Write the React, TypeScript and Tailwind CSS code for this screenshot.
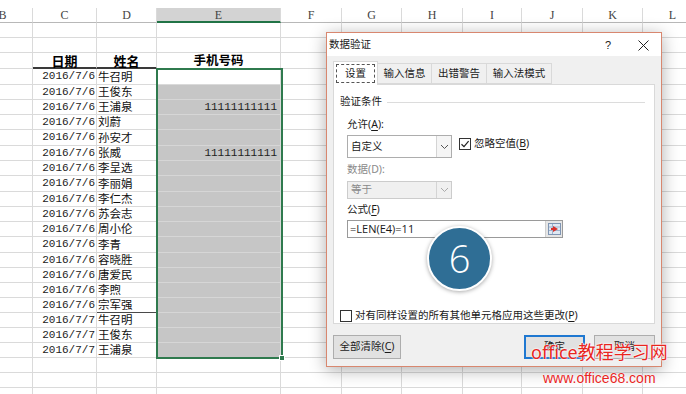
import React from "react"

const COLS = [60, 64, 60, 124, 61, 60, 61, 59, 61, 60, 60]
const LETTERS = ["B", "C", "D", "E", "F", "G", "H", "I", "J", "K", "L"]
const ROW_H = [15, 15, 16, 16, 15, 15, 15, 16, 15, 15, 16, 15, 15, 15, 16, 15, 15, 15, 15, 15, 15, 15, 15, 15, 15]

const NAMES = [
  "牛召明", "王俊东", "王浦泉", "刘蔚", "孙安才", "张威", "李呈选", "李丽娟", "李仁杰", "苏会志",
  "周小伦", "李青", "容晓胜", "唐爱民", "李煦", "宗军强", "牛召明", "王俊东", "王浦泉",
]

const cjk = "font-['Noto_Sans_CJK_SC',sans-serif]"
const ui = "font-['Noto_Sans','Noto_Sans_CJK_SC',sans-serif]"

const Cell = ({ w, h, className = "", children }: { w: number; h: number; className?: string; children?: React.ReactNode }) => (
  <div
    className={`shrink-0 border-r border-b border-[#dadada] flex items-center whitespace-nowrap leading-none ${className}`}
    style={{ width: w, height: h }}
  >
    {children}
  </div>
)

const SheetRow = ({ index }: { index: number }) => {
  const h = ROW_H[index]
  const d = index - 3
  const isData = d >= 0 && d < NAMES.length
  return (
    <div className="flex">
      {COLS.map((w, c) => {
        if (index === 2 && c === 1)
          return (
            <Cell key={c} w={w} h={h} className={`justify-center font-bold text-[13px] text-black border-b-2 border-b-[#3a3a3a] ${cjk}`}>
              日期
            </Cell>
          )
        if (index === 2 && c === 2)
          return (
            <Cell key={c} w={w} h={h} className={`justify-center font-bold text-[13px] text-black border-b-2 border-b-[#3a3a3a] ${cjk}`}>
              姓名
            </Cell>
          )
        if (index === 2 && c === 3)
          return (
            <Cell key={c} w={w} h={h} className={`justify-center font-bold text-[12.5px] text-black ${cjk}`}>
              手机号码
            </Cell>
          )
        if (isData && c === 1)
          return (
            <Cell key={c} w={w} h={h} className="justify-end pr-[1px] text-[11px] text-[#222] font-['Liberation_Mono',monospace]">
              {d < 16 ? "2016/7/6" : "2016/7/7"}
            </Cell>
          )
        if (isData && c === 2)
          return (
            <Cell key={c} w={w} h={h} className={`pl-[1px] text-[11.5px] text-[#111] ${cjk} ${d === 15 ? "border-b-[#4a4a4a]" : ""}`}>
              {NAMES[d]}
            </Cell>
          )
        if (isData && c === 3)
          return (
            <Cell
              key={c}
              w={w}
              h={h}
              className={`justify-end pr-[3px] text-[11px] text-[#222] font-['Liberation_Mono',monospace] ${d > 0 ? "bg-[#c6c6c6] border-b-[#d6d6d6]" : ""}`}
            >
              {d === 2 || d === 5 ? "11111111111" : ""}
            </Cell>
          )
        return <Cell key={c} w={w} h={h} />
      })}
    </div>
  )
}

const Check = ({ checked }: { checked?: boolean }) => (
  <div className="w-[12px] h-[12px] border border-[#333] bg-white flex items-center justify-center shrink-0">
    {checked && (
      <svg width="10" height="10" viewBox="0 0 10 10">
        <path d="M1.5 5.2 L4 7.6 L8.6 2.2" fill="none" stroke="#222" strokeWidth="1.2" />
      </svg>
    )}
  </div>
)

const Chevron = ({ color }: { color: string }) => (
  <svg width="9" height="6" viewBox="0 0 9 6">
    <path d="M1 1 L4.5 4.5 L8 1" fill="none" stroke={color} strokeWidth="1" />
  </svg>
)

const U = ({ children }: { children: React.ReactNode }) => <span className="underline underline-offset-2">{children}</span>

const Dialog = () => (
  <div className={`absolute left-[326px] top-[32px] w-[336px] h-[335px] border border-[#d8876f] bg-[#f0f0f0] shadow-[0_3px_16px_rgba(0,0,0,0.32)] flex flex-col text-[10.5px] text-[#1a1a1a] ${ui}`}>
    {/* title bar */}
    <div className="h-[23px] bg-white flex items-center pl-[2px] pr-[12px] shrink-0">
      <span className="flex-1 mt-[1px]">数据验证</span>
      <span className="mr-[27px] mt-[1px] text-[11px] font-['Liberation_Sans',sans-serif]">?</span>
      <svg width="11" height="11" viewBox="0 0 11 11" className="mt-[1px]">
        <path d="M0.5 0.5 L10.5 10.5 M10.5 0.5 L0.5 10.5" stroke="#222" strokeWidth="1" />
      </svg>
    </div>
    <div className="flex-1 flex flex-col px-[6px] pt-[5px] bg-[#f0f0f0]">
      {/* tabs */}
      <div className="flex items-end h-[23px] shrink-0">
        <div className="relative z-10 w-[45px] h-[24px] -mb-px bg-white border border-b-0 border-[#d9d9d9] flex items-center justify-center">
          <div className="w-[39px] h-[19px] border border-dashed border-[#555] flex items-center justify-center">设置</div>
        </div>
        <div className="w-[54px] h-[21px] border border-l-0 border-[#d9d9d9] flex items-center justify-center bg-[#f0f0f0]">输入信息</div>
        <div className="w-[55px] h-[21px] border border-l-0 border-[#d9d9d9] flex items-center justify-center bg-[#f0f0f0]">出错警告</div>
        <div className="w-[65px] h-[21px] border border-l-0 border-[#d9d9d9] flex items-center justify-center bg-[#f0f0f0]">输入法模式</div>
      </div>
      {/* panel */}
      <div className="h-[240px] bg-white border border-[#d9d9d9] flex flex-col px-[6px] shrink-0">
        <div className="flex items-center mt-[10px] h-[14px]">
          <span>验证条件</span>
          <div className="flex-1 h-px bg-[#dcdcdc] ml-[5px] mr-[3px]" />
        </div>
        <div className="ml-[7px] mt-[9px] h-[14px] flex items-center">
          允许(<U>A</U>):
        </div>
        <div className="ml-[7px] mt-[3px] flex items-center">
          <div className="w-[105px] h-[23px] border border-[#adadad] bg-white flex items-center">
            <span className="flex-1 pl-[3px]">自定义</span>
            <div className="w-[15px] h-full border-l border-[#d4d4d4] bg-[#f5f5f5] flex items-center justify-center">
              <Chevron color="#555" />
            </div>
          </div>
          <div className="ml-[7px] flex items-center gap-[3px] -mt-[6px]">
            <Check checked />
            <span>
              忽略空值(<U>B</U>)
            </span>
          </div>
        </div>
        <div className="ml-[7px] mt-[5px] h-[14px] flex items-center text-[#8a8a8a]">数据(D):</div>
        <div className="ml-[7px] mt-[4px] w-[105px] h-[23px] border border-[#cccccc] bg-[#f0f0f0] flex items-center text-[#8a8a8a]">
          <span className="flex-1 pl-[3px]">等于</span>
          <div className="w-[15px] h-full border-l border-[#d4d4d4] flex items-center justify-center">
            <Chevron color="#aaa" />
          </div>
        </div>
        <div className="ml-[7px] mt-[4px] h-[14px] flex items-center">
          公式(<U>F</U>)
        </div>
        <div className="ml-[7px] mt-[3px] w-[216px] h-[21px] border border-[#9a9a9a] bg-white flex items-center">
          <span className="flex-1 pl-[2px] text-[11px] font-['Open_Sans',sans-serif]">=LEN(E4)=11</span>
          <div className="w-[17px] h-full bg-[#e6e6e6] border-l border-[#cfcfcf] flex items-center justify-center">
            <svg width="13" height="12" viewBox="0 0 13 12">
              <rect x="0.5" y="0.5" width="12" height="11" fill="#dfe8f3" stroke="#7f95b3" />
              <path d="M1 4 H12 M1 7.5 H12 M4.5 1 V11" stroke="#9fb3cc" strokeWidth="1" />
              <path d="M5 3 L10 6 L5 9 Z" fill="#d9302a" />
              <rect x="3" y="5" width="4" height="2" fill="#d9302a" />
            </svg>
          </div>
        </div>
        <div className="mt-[70px] flex items-center gap-[3px]">
          <Check />
          <span>
            对有同样设置的所有其他单元格应用这些更改(<U>P</U>)
          </span>
        </div>
      </div>
      {/* buttons */}
      <div className="mt-[11px] flex items-center h-[24px]">
        <div className="w-[68px] h-[24px] bg-[#e1e1e1] border border-[#adadad] flex items-center justify-center">
          全部清除(<U>C</U>)
        </div>
        <div className="flex-1" />
        <div className="w-[61px] h-[24px] bg-[#e1e1e1] border-2 border-[#1f78d1] flex items-center justify-center">确定</div>
        <div className="ml-[9px] w-[61px] h-[24px] bg-[#e1e1e1] border border-[#adadad] flex items-center justify-center">取消</div>
      </div>
    </div>
  </div>
)

export default function App() {
  return (
    <div className="relative w-[686px] h-[394px] overflow-hidden bg-white">
      <div className="-ml-[27px] pt-[8px]">
        {/* column header */}
        <div className="flex">
          {COLS.map((w, c) => (
            <div
              key={c}
              className={`shrink-0 h-[15px] flex items-center justify-center leading-none text-[12px] text-[#444] font-['Liberation_Serif',serif] border-r border-[#dadada] ${
                c === 3 ? "bg-[#d3d3d3] border-b-2 border-b-[#217346] text-[#1e5e3a]" : "bg-white border-b border-b-[#b8b8b8]"
              }`}
              style={{ width: w }}
            >
              {LETTERS[c]}
            </div>
          ))}
        </div>
        {ROW_H.map((_, i) => (
          <SheetRow key={i} index={i} />
        ))}
      </div>

      {/* selection outline */}
      <div className="absolute left-[156px] top-[68px] w-[127px] h-[291px] border-2 border-[#2f7a4e]" />
      <div className="absolute left-[279px] top-[355px] w-[6px] h-[6px] bg-[#2f7a4e] border border-white" />

      <Dialog />

      {/* step badge */}
      <div className="absolute left-[427px] top-[226px] w-[65px] h-[65px] rounded-full bg-[#2f6e95] border-2 border-white shadow-[0_1px_4px_rgba(0,0,0,0.35)] flex items-center justify-center">
        <span className="text-white text-[38px] font-light leading-none font-['Open_Sans',sans-serif] -mt-[2px]">6</span>
      </div>

      {/* watermark */}
      <div className={`absolute left-[531px] top-[341px] text-[18px] leading-[22px] text-[#e8261f] ${ui} [text-shadow:0_0_2px_#fff,0_0_2px_#fff,0_0_1px_#fff]`}>
        office教程学习网
      </div>
      <div className="absolute left-[543px] top-[369px] text-[14px] leading-[18px] text-[#e8261f] font-['Liberation_Sans',sans-serif] [text-shadow:0_0_2px_#fff,0_0_1px_#fff]">
        www.office68.com
      </div>
    </div>
  )
}
